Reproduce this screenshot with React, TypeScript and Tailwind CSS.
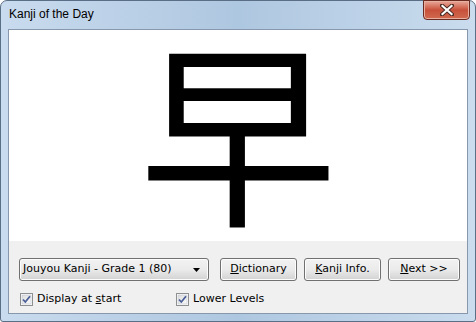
import { type FC, type ReactNode } from 'react';

const uiFont = { fontFamily: '"DejaVu Sans", Tahoma, sans-serif' };

/**
 * Classic Win7-style push button
 */
const PushButton: FC<{ width: string; children: ReactNode }> = ({ width, children }) => (
  <button
    className={`${width} h-[23px] rounded-[3px] border border-[#707070] bg-gradient-to-b from-[#f2f2f2] via-[#ebebeb] to-[#d2d2d2] text-[11px] text-black shadow-[inset_0_0_0_1px_#fcfcfc] flex items-center justify-center`}
  >
    {children}
  </button>
);

/**
 * Checkbox with label
 */
const Check: FC<{ children: ReactNode }> = ({ children }) => (
  <label className="flex items-center gap-[4px] text-[11px] text-black">
    <svg width="13" height="13" viewBox="0 0 13 13" aria-hidden="true">
      <defs>
        <linearGradient id="cbfill" x1="0" y1="0" x2="1" y2="1">
          <stop offset="0" stopColor="#dcdcdc" />
          <stop offset="1" stopColor="#fbfbfb" />
        </linearGradient>
      </defs>
      <rect x="0.5" y="0.5" width="12" height="12" fill="#fff" stroke="#8e8f8f" />
      <rect x="2" y="2" width="9" height="9" fill="url(#cbfill)" stroke="#c0c4cc" strokeWidth="0.6" />
      <path d="M3 6.5 L5.3 9 L10 3.3" fill="none" stroke="#4a5f97" strokeWidth="1.8" />
    </svg>
    <span>{children}</span>
  </label>
);

export default function App() {
  return (
    <div className="w-[476px] h-[322px] bg-white" style={uiFont}>
      <div className="relative w-full h-full rounded-t-[7px] rounded-b-[3px] border border-[#5a6e85] bg-gradient-to-r from-[#c9dbee] via-[#aec7e0] to-[#cadcee] flex flex-col px-[7px] pb-[7px]">
        {/* Title bar */}
        <div className="h-[28px] flex items-start justify-between">
          <span
            className="pt-[4px] pl-[1px] text-[12px] text-black"
            style={{ fontFamily: '"Liberation Sans", Arial, sans-serif' }}
          >
            Kanji of the Day
          </span>
          <div className="mr-[-2px] mt-[-1px] w-[47px] h-[20px] rounded-b-[4px] border border-[#6b2a20] bg-gradient-to-b from-[#e8a89a] via-[#c8503a] to-[#d06a50] shadow-[inset_0_0_0_1px_#e8b0a0] flex items-center justify-center">
            <svg width="14" height="12" viewBox="0 0 14 12" aria-hidden="true">
              <path d="M2 1.5 L12 10.5 M12 1.5 L2 10.5" stroke="#4a2a24" strokeWidth="4" strokeLinecap="square" />
              <path d="M2.5 2 L11.5 10 M11.5 2 L2.5 10" stroke="#ffffff" strokeWidth="2.2" strokeLinecap="square" />
            </svg>
          </div>
        </div>

        {/* Client area */}
        <div className="flex-1 flex flex-col border border-[#8798ad] bg-[#f0f0f0]">
          <div className="h-[211px] bg-white flex items-start justify-center">
            <span
              className="text-[198px] leading-[189px] text-black"
              style={{ fontFamily: '"Noto Sans CJK JP", sans-serif' }}
            >
              早
            </span>
          </div>

          <div className="flex items-center gap-[7px] pl-[10px] pt-[17px]">
            <div className="w-[190px] h-[23px] rounded-[3px] border border-[#707070] bg-gradient-to-b from-[#f2f2f2] via-[#ebebeb] to-[#d2d2d2] shadow-[inset_0_0_0_1px_#fcfcfc] flex items-center justify-between pl-[3px] pr-[8px] text-[11px] text-black">
              <span>Jouyou Kanji - Grade 1 (80)</span>
              <svg width="7" height="4" viewBox="0 0 7 4" aria-hidden="true">
                <path d="M0 0 H7 L3.5 4 Z" fill="#000" />
              </svg>
            </div>
            <div className="ml-[4px] flex gap-[7px]">
              <PushButton width="w-[77px]">
                <span><u>D</u>ictionary</span>
              </PushButton>
              <PushButton width="w-[77px]">
                <span><u>K</u>anji Info.</span>
              </PushButton>
              <PushButton width="w-[72px]">
                <span><u>N</u>ext &gt;&gt;</span>
              </PushButton>
            </div>
          </div>

          <div className="flex items-center pl-[11px] pt-[10px]">
            <div className="w-[156px]">
              <Check>
                Display at <u>s</u>tart
              </Check>
            </div>
            <Check>Lower Levels</Check>
          </div>
        </div>
      </div>
    </div>
  );
}
